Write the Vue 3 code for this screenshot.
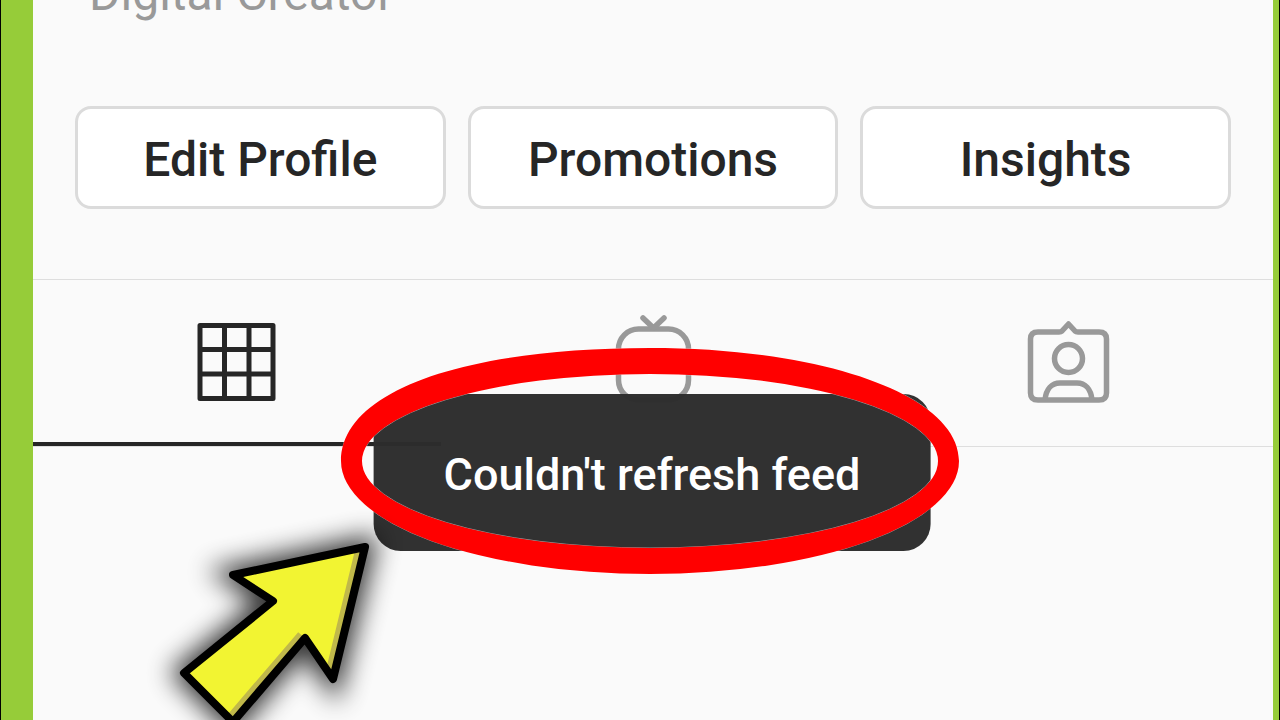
<script setup>
import { ref } from 'vue'

const actions = ['Edit Profile', 'Promotions', 'Insights']
const active = ref('grid')
</script>

<template>
  <div class="stage">
    <main class="screen">
      <p class="category">Digital Creator</p>

      <div class="actions">
        <button v-for="label in actions" :key="label" type="button" class="action">{{ label }}</button>
      </div>

      <nav class="tabs">
        <button type="button" class="tab" :class="{ active: active === 'grid' }" aria-label="Posts" @click="active = 'grid'">
          <svg viewBox="0 0 96 96" class="icon" stroke-width="5" stroke-linejoin="round">
            <rect x="11" y="10.5" width="73" height="73" />
            <path d="M35.5 10V84M60 10V84M11 34.5H84M11 59H84" />
          </svg>
        </button>
        <button type="button" class="tab" :class="{ active: active === 'video' }" aria-label="Videos" @click="active = 'video'">
          <svg viewBox="0 0 96 96" class="icon" stroke-width="5.5" stroke-linecap="round" stroke-linejoin="round">
            <rect x="13.5" y="14" width="70" height="71" rx="20" />
            <path d="M38 3L48.5 13L59 3" />
          </svg>
        </button>
        <button type="button" class="tab" :class="{ active: active === 'tagged' }" aria-label="Tagged" @click="active = 'tagged'">
          <svg viewBox="0 0 96 96" class="icon" stroke-width="5.5" stroke-linejoin="round">
            <path d="M17 17H38Q40 17 41 16L47.5 9L54 16Q55 17 57 17H78Q85.5 17 85.5 24V78Q85.5 85 78 85H17Q9.5 85 9.5 78V24Q9.5 17 17 17Z" />
            <circle cx="47.5" cy="43.5" r="14" />
            <path d="M24 85C25 74 31 68 39 68H56C64 68 70 74 71 85" />
          </svg>
        </button>
      </nav>
    </main>

    <div class="toast" role="status">Couldn't refresh feed</div>

    <svg class="marks" viewBox="0 0 1280 720" aria-hidden="true">
      <defs>
        <filter id="soft" x="-40%" y="-40%" width="180%" height="180%">
          <feGaussianBlur stdDeviation="13" />
        </filter>
        <clipPath id="arrow-clip">
          <path d="M365 547L233 575L273 601L184 673L233 722L305 638L333 679Z" />
        </clipPath>
      </defs>
      <path
        class="ring"
        d="M341 461C341 392 460 348 650 348C826 348 959 396 959 461A309 113 0 0 1 341 461ZM362 461A288 87 0 0 0 938 461A288 87 0 0 0 362 461Z"
      />
      <path class="shadow" filter="url(#soft)" d="M365 547L233 575L273 601L184 673L233 722L305 638L333 679Z" />
      <path fill="#f2f432" d="M365 547L233 575L273 601L184 673L233 722L305 638L333 679Z" />
      <g clip-path="url(#arrow-clip)" stroke="#c0b84a" stroke-width="18" fill="none">
        <path d="M365 547L333 679M305 638L233 722" />
      </g>
      <path class="outline" d="M365 547L233 575L273 601L184 673L233 722L305 638L333 679Z" />
    </svg>
  </div>
</template>

<style>
body {
  margin: 0;
}
</style>

<style scoped>
.stage {
  position: relative;
  box-sizing: border-box;
  height: 100vh;
  padding: 0 1px;
  overflow: hidden;
  background: #000;
  font-family: Roboto, "Liberation Sans", sans-serif;
}

.screen {
  box-sizing: border-box;
  height: 100%;
  overflow: hidden;
  border: solid #96cc39;
  border-width: 0 6px 0 32px;
  background: #fafafa;
}

.category {
  margin: -34px 0 0 56px;
  color: #999;
  font-size: 48px;
  line-height: 56px;
}

.actions {
  display: grid;
  grid-template-columns: repeat(3, 1fr);
  gap: 22px;
  padding: 84px 42px 70px;
}

.action {
  height: 103px;
  padding: 4px 0 0;
  border: 3px solid #dbdbdb;
  border-radius: 16px;
  background: #fff;
  color: #262626;
  font: 500 48px/56px Roboto, "Liberation Sans", sans-serif;
}

.tabs {
  display: grid;
  grid-template-columns: repeat(3, 1fr);
  margin: 0 -4px;
  border-top: 1px solid #dedede;
  border-bottom: 1px solid #dedede;
}

.tab {
  position: relative;
  display: flex;
  align-items: center;
  justify-content: center;
  height: 166px;
  padding: 0;
  border: 0;
  background: none;
  color: #999;
}

.tab.active {
  color: #262626;
}

.tab.active::after {
  content: "";
  position: absolute;
  right: 4px;
  bottom: 0;
  left: 0;
  height: 4px;
  background: #262626;
}

.icon {
  width: 96px;
  height: 96px;
  fill: none;
  stroke: currentColor;
}

.toast {
  position: absolute;
  top: 394px;
  left: 50%;
  box-sizing: border-box;
  margin-left: 12px;
  padding: 53px 70px 48px;
  border-radius: 27px;
  background: rgba(45, 45, 45, 0.98);
  color: #fff;
  font-size: 45px;
  font-weight: 500;
  line-height: 56px;
  white-space: nowrap;
  transform: translateX(-50%);
}

.marks {
  position: absolute;
  top: 0;
  left: 0;
  width: 100%;
  height: 100%;
}

.ring {
  fill: #f00;
  fill-rule: evenodd;
  stroke: rgba(255, 255, 255, 0.5);
  stroke-width: 1px;
  paint-order: stroke;
}

.shadow {
  fill: #000;
  stroke: #000;
  stroke-width: 20;
  opacity: 0.8;
}

.outline {
  fill: none;
  stroke: #000;
  stroke-width: 8;
  stroke-linejoin: round;
}
</style>
